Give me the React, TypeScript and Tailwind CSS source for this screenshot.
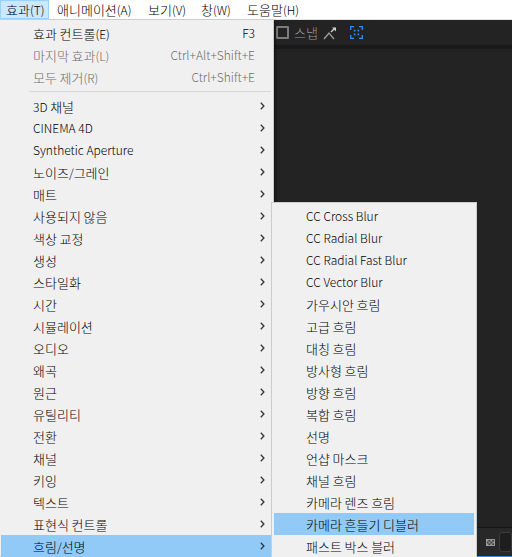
import React from "react";

const FONT = { fontFamily: '"Noto Sans CJK KR", "Noto Sans", sans-serif' };

type Item = { label: string; shortcut?: string; disabled?: boolean; arrow?: boolean; active?: boolean };

const topItems: Item[] = [
  { label: "효과 컨트롤(E)", shortcut: "F3" },
  { label: "마지막 효과(L)", shortcut: "Ctrl+Alt+Shift+E", disabled: true },
  { label: "모두 제거(R)", shortcut: "Ctrl+Shift+E", disabled: true },
];

const catItems: string[] = [
  "3D 채널",
  "CINEMA 4D",
  "Synthetic Aperture",
  "노이즈/그레인",
  "매트",
  "사용되지 않음",
  "색상 교정",
  "생성",
  "스타일화",
  "시간",
  "시뮬레이션",
  "오디오",
  "왜곡",
  "원근",
  "유틸리티",
  "전환",
  "채널",
  "키잉",
  "텍스트",
  "표현식 컨트롤",
  "흐림/선명",
];

const subItems: string[] = [
  "CC Cross Blur",
  "CC Radial Blur",
  "CC Radial Fast Blur",
  "CC Vector Blur",
  "가우시안 흐림",
  "고급 흐림",
  "대칭 흐림",
  "방사형 흐림",
  "방향 흐림",
  "복합 흐림",
  "선명",
  "언샵 마스크",
  "채널 흐림",
  "카메라 렌즈 흐림",
  "카메라 흔들기 디블러",
  "패스트 박스 블러",
];

const HANGUL = /([\u1100-\u11FF\u3130-\u318F\uAC00-\uD7AF]+)/;

function T({ text }: { text: string }) {
  const parts = text.split(HANGUL).filter((p) => p.length > 0);
  return (
    <span className="whitespace-pre text-[12px] leading-none">
      {parts.map((p, i) =>
        HANGUL.test(p) ? (
          <span key={i} className="text-[13px] font-light">
            {p}
          </span>
        ) : (
          <span key={i} className="text-[12px] font-light">
            {p}
          </span>
        )
      )}
    </span>
  );
}

function Chevron() {
  return (
    <svg width="5" height="8" viewBox="0 0 5 8" className="block">
      <path d="M0.8 0.8 L3.9 4 L0.8 7.2" fill="none" stroke="#333333" strokeWidth="1.3" />
    </svg>
  );
}

function MenuRow({ item }: { item: Item }) {
  return (
    <div
      className={
        "flex items-center h-[22px] pl-[32px] pr-[6px] text-[12px] leading-none whitespace-nowrap " +
        (item.active ? "bg-[#91c9f7] " : "") +
        (item.disabled ? "text-[#6d6d6d]" : "text-black")
      }
    >
      <span className="flex-1">
        <T text={item.label} />
      </span>
      {item.shortcut && <span className="text-[12px] font-light">{item.shortcut}</span>}
      <span className="w-[5px] ml-[5px] flex items-center justify-center">{item.arrow && <Chevron />}</span>
    </div>
  );
}

function SubRow({ label, active }: { label: string; active?: boolean }) {
  return (
    <div
      className={
        "flex items-center h-[22px] pl-[32px] text-[12px] leading-none whitespace-nowrap text-black " +
        (active ? "bg-[#91c9f7]" : "")
      }
    >
      <T text={label} />
    </div>
  );
}

function SnapIcon() {
  return (
    <svg width="14" height="14" viewBox="0 0 14 14">
      <path d="M1 13 L6 7 L11 13" fill="none" stroke="#9a9a9a" strokeWidth="1.4" />
      <path d="M8 6 L12 2" stroke="#d0d0d0" strokeWidth="1.4" />
      <path d="M9 1.5 L13 1.5 L13 5.5 Z" fill="#d0d0d0" />
    </svg>
  );
}

function FocusIcon() {
  return (
    <svg width="13" height="13" viewBox="0 0 13 13">
      <g fill="none" stroke="#2f8fef" strokeWidth="1.3">
        <path d="M0.7 4 V0.7 H4" />
        <path d="M9 0.7 H12.3 V4" />
        <path d="M12.3 9 V12.3 H9" />
        <path d="M4 12.3 H0.7 V9" />
        <path d="M4.5 5.5 V4.5 H5.5" />
        <path d="M7.5 4.5 H8.5 V5.5" />
        <path d="M8.5 7.5 V8.5 H7.5" />
        <path d="M5.5 8.5 H4.5 V7.5" />
      </g>
    </svg>
  );
}

function CheckerIcon() {
  return (
    <svg width="14" height="11" viewBox="0 0 14 11">
      <rect x="0" y="0" width="14" height="11" fill="#cfcfcf" />
      <rect x="1" y="1" width="12" height="9" fill="#3a3a3a" />
      <g fill="#9a9a9a">
        <rect x="1" y="1" width="3" height="3" />
        <rect x="7" y="1" width="3" height="3" />
        <rect x="4" y="4" width="3" height="3" />
        <rect x="10" y="4" width="3" height="3" />
        <rect x="1" y="7" width="3" height="3" />
        <rect x="7" y="7" width="3" height="3" />
      </g>
    </svg>
  );
}

export default function App() {
  return (
    <div className="relative w-[512px] h-[557px] overflow-hidden bg-[#232323] flex flex-col" style={FONT}>
      {/* menubar */}
      <div className="h-[19px] bg-white flex items-stretch text-black text-[12px] leading-none shrink-0">
        <div className="w-[49px] pl-[5px] flex items-center bg-[#cce8ff] border border-[#99d1ff]">
          <T text="효과(T)" />
        </div>
        <div className="ml-[8px] w-[91px] flex items-center">
          <T text="애니메이션(A)" />
        </div>
        <div className="w-[53px] flex items-center">
          <T text="보기(V)" />
        </div>
        <div className="w-[46px] flex items-center">
          <T text="창(W)" />
        </div>
        <div className="flex items-center">
          <T text="도움말(H)" />
        </div>
      </div>

      <div className="flex flex-1 min-h-0">
        {/* main menu */}
        <div className="ml-[-2px] w-[276px] shrink-0 bg-[#f0f0f0] border border-[#cccccc] p-[2px] shadow-[2px_2px_2px_rgba(0,0,0,0.35)] relative z-10">
          {topItems.map((it) => (
            <MenuRow key={it.label} item={it} />
          ))}
          <div className="h-[7px] flex items-center pl-[28px]">
            <div className="h-[1px] w-full bg-[#d7d7d7]" />
          </div>
          {catItems.map((c) => (
            <MenuRow key={c} item={{ label: c, arrow: true, active: c === "흐림/선명" }} />
          ))}
        </div>

        {/* dark app area */}
        <div className="flex-1 min-w-0 flex flex-col border-t border-[#e3e3e3]">
          <div className="h-[25px] shrink-0 bg-[#232323] flex items-center pl-[2px] gap-[5px] text-[#9d9d9d] text-[12px] leading-none">
            <div className="w-[13px] h-[13px] border-2 border-[#7c7c7c] rounded-[1px]" />
            <span className="text-[13px] font-light">스냅</span>
            <SnapIcon />
            <div className="ml-[8px]">
              <FocusIcon />
            </div>
          </div>
          <div className="h-[4px] shrink-0 bg-[#1a1a1a]" />
          <div className="flex-1 bg-[#232323]" />
          <div className="h-[1px] bg-[#161616]" />
          <div className="h-[28px] bg-[#282828] flex items-center pl-[212px] gap-[4px]">
            <CheckerIcon />
            <div className="w-[20px] h-[20px] rounded-[3px] border border-[#3c3c3c] bg-[#1e1e1e]" />
          </div>
          <div className="h-[1px] bg-[#2d8ceb]" />
        </div>
      </div>

      {/* submenu overlay */}
      <div className="absolute left-[271px] top-[202px] w-[206px] bg-[#f0f0f0] border border-[#cccccc] p-[2px] z-20">
        {subItems.map((s) => (
          <SubRow key={s} label={s} active={s === "카메라 흔들기 디블러"} />
        ))}
      </div>
    </div>
  );
}
